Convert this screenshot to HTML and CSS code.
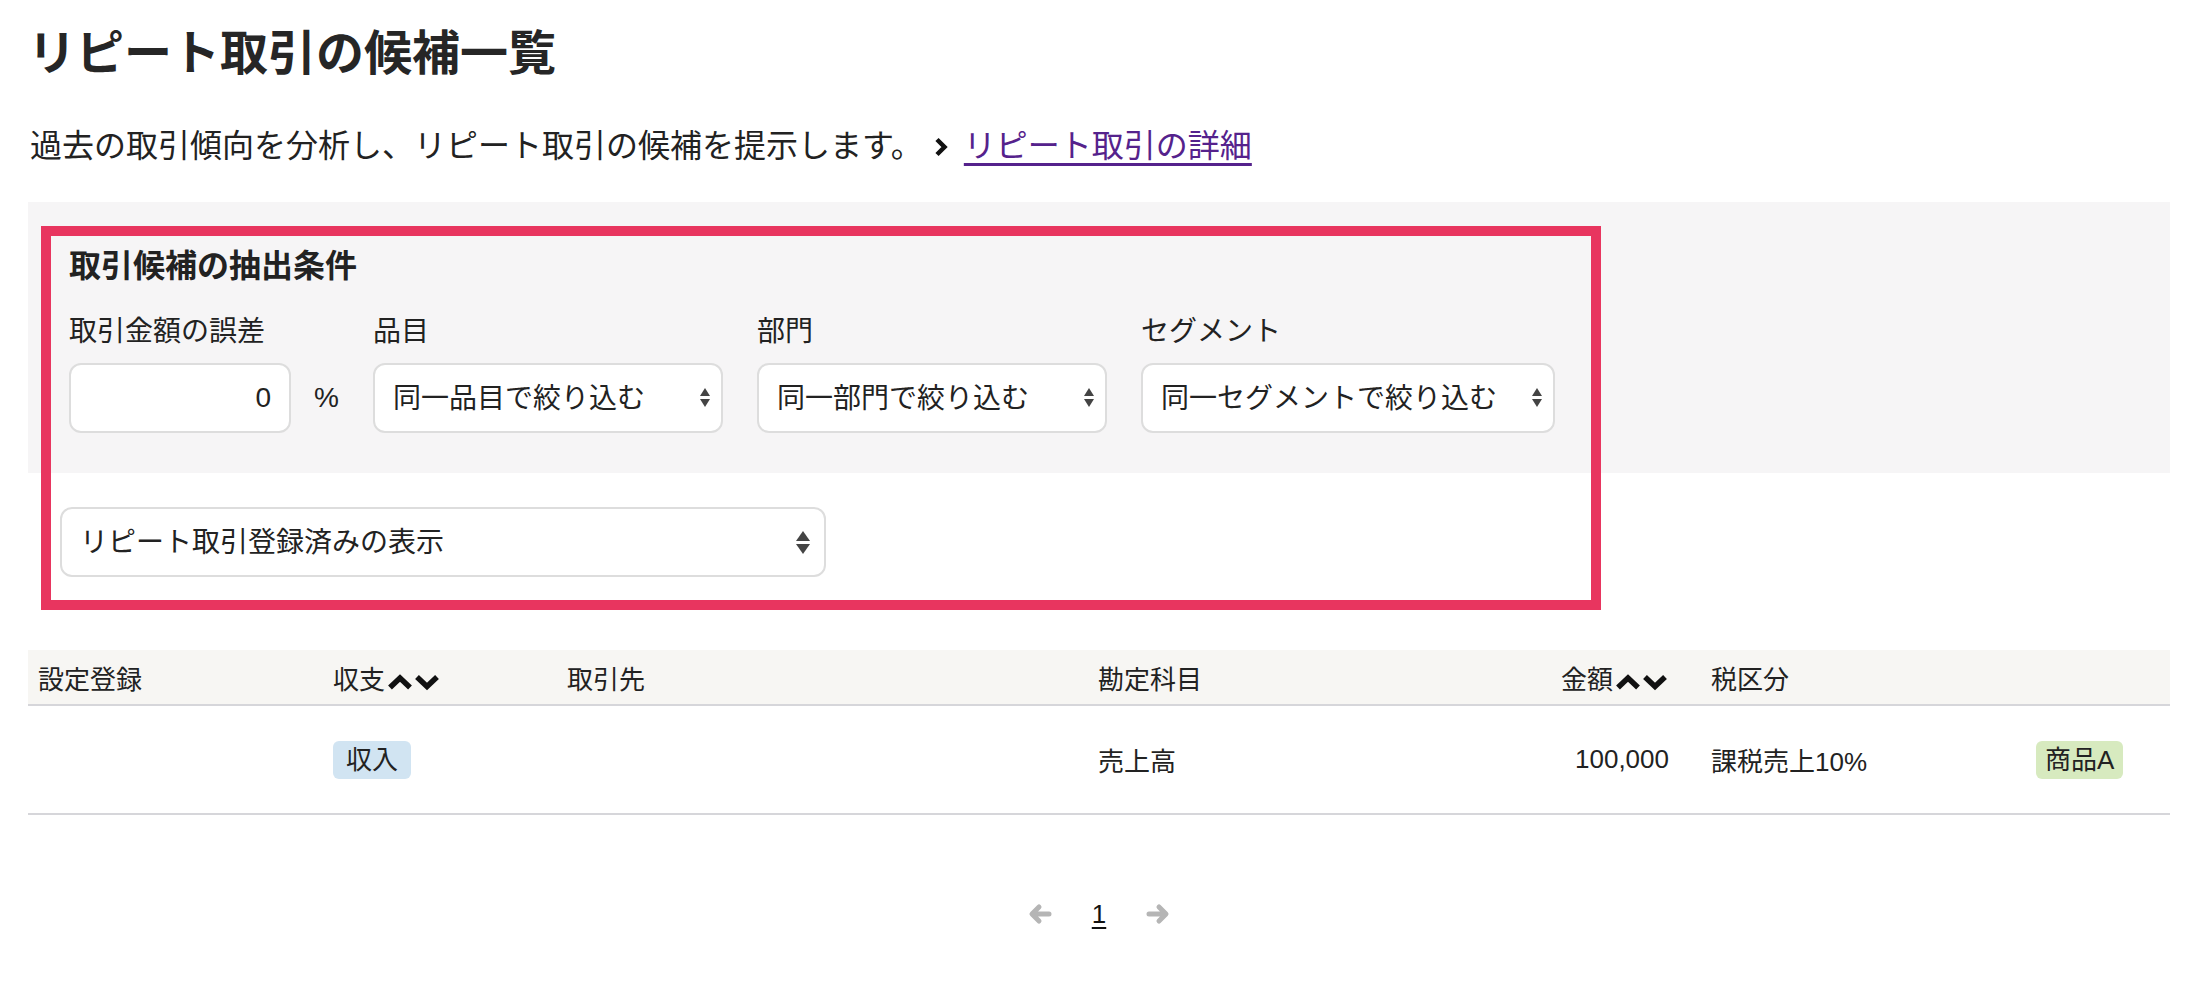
FILE: index.html
```html
<!DOCTYPE html>
<html lang="ja">
<head>
    <meta charset="UTF-8">
    <meta name="viewport" content="width=device-width, initial-scale=1.0">
    <title>リピート取引の候補一覧</title>
    <link rel="stylesheet" href="styles.css">
</head>
<body>
    <div class="page">
        <h1 class="page-title">リピート取引の候補一覧</h1>

        <p class="lead">過去の取引傾向を分析し、リピート取引の候補を提示します。<span class="lead-link"><svg class="chevron" width="16" height="22" viewBox="0 0 16 22"><polyline points="4,3.5 11.5,11 4,18.5" fill="none" stroke="#111" stroke-width="4.5"/></svg><a href="#">リピート取引の詳細</a></span></p>

        <section class="filters">
            <div class="conditions">
                <h2 class="conditions-title">取引候補の抽出条件</h2>
                <div class="conditions-row">
                    <div class="field">
                        <label class="field-label" for="amountDiff">取引金額の誤差</label>
                        <div class="field-inline">
                            <input class="text-input" id="amountDiff" type="text" value="0">
                            <span class="unit">%</span>
                        </div>
                    </div>
                    <div class="field">
                        <label class="field-label" for="itemFilter">品目</label>
                        <div class="select-wrap">
                            <select class="select select-item" id="itemFilter">
                                <option>同一品目で絞り込む</option>
                            </select>
                        </div>
                    </div>
                    <div class="field">
                        <label class="field-label" for="sectionFilter">部門</label>
                        <div class="select-wrap">
                            <select class="select select-item" id="sectionFilter">
                                <option>同一部門で絞り込む</option>
                            </select>
                        </div>
                    </div>
                    <div class="field">
                        <label class="field-label" for="segmentFilter">セグメント</label>
                        <div class="select-wrap">
                            <select class="select select-segment" id="segmentFilter">
                                <option>同一セグメントで絞り込む</option>
                            </select>
                        </div>
                    </div>
                </div>
            </div>

            <div class="display-option">
                <div class="select-wrap select-wrap-large">
                    <select class="select select-wide">
                        <option>リピート取引登録済みの表示</option>
                    </select>
                </div>
            </div>

            <div class="highlight"></div>
        </section>

        <table class="candidates">
            <colgroup>
                <col class="col-setting">
                <col class="col-type">
                <col class="col-partner">
                <col class="col-account">
                <col class="col-amount">
                <col class="col-tax">
                <col class="col-tag">
            </colgroup>
            <thead>
                <tr>
                    <th>設定登録</th>
                    <th>収支<svg class="sort-icon" width="54" height="18" viewBox="0 0 54 18"><polyline points="3,14.5 13,5 23,14.5" fill="none" stroke="#111" stroke-width="5.5"/><polyline points="30,4 40,13.5 50,4" fill="none" stroke="#111" stroke-width="5.5"/></svg></th>
                    <th>取引先</th>
                    <th>勘定科目</th>
                    <th class="num">金額<svg class="sort-icon" width="54" height="18" viewBox="0 0 54 18"><polyline points="3,14.5 13,5 23,14.5" fill="none" stroke="#111" stroke-width="5.5"/><polyline points="30,4 40,13.5 50,4" fill="none" stroke="#111" stroke-width="5.5"/></svg></th>
                    <th class="tax">税区分</th>
                    <th></th>
                </tr>
            </thead>
            <tbody>
                <tr>
                    <td></td>
                    <td><span class="badge badge-income">収入</span></td>
                    <td></td>
                    <td>売上高</td>
                    <td class="num">100,000</td>
                    <td class="tax">課税売上10%</td>
                    <td><span class="badge badge-item">商品A</span></td>
                </tr>
            </tbody>
        </table>

        <nav class="pager">
            <svg class="pager-arrow" width="24" height="22" viewBox="0 0 24 22"><path d="M21 11H5M11 4L4 11l7 7" fill="none" stroke="#b5b5b5" stroke-width="5" stroke-linecap="round" stroke-linejoin="round"/></svg>
            <a class="pager-page" href="#">1</a>
            <svg class="pager-arrow" width="24" height="22" viewBox="0 0 24 22"><path d="M3 11h16M13 4l7 7-7 7" fill="none" stroke="#b5b5b5" stroke-width="5" stroke-linecap="round" stroke-linejoin="round"/></svg>
        </nav>
    </div>
</body>
</html>
```

FILE: styles.css
```css
body, html {
    margin: 0;
    padding: 0;
    background: #fff;
    color: #222;
    font-family: 'Liberation Sans', 'Noto Sans CJK JP', sans-serif;
}

.page {
    padding: 18px 26px 40px 28px;
}

.page-title {
    margin: 0;
    font-size: 48px;
    line-height: 72px;
    font-weight: bold;
    color: #262626;
}

.lead {
    margin: 32px 0 0 2px;
    font-size: 32px;
    line-height: 48px;
}

.lead-link {
    margin-left: 10px;
}

.chevron {
    vertical-align: -1px;
    margin-right: 15px;
}

.lead-link a {
    color: #55228c;
    text-decoration: underline;
    text-decoration-thickness: 3px;
    text-underline-offset: 6px;
}

/* filter area */

.filters {
    position: relative;
    margin-top: 32px;
}

.conditions {
    background: #f6f5f6;
    padding: 40px 41px 40px;
}

.conditions-title {
    margin: 0;
    font-size: 32px;
    line-height: 48px;
    font-weight: bold;
}

.conditions-row {
    display: flex;
    gap: 34px;
    margin-top: 21px;
}

.field-label {
    display: block;
    font-size: 28px;
    line-height: 42px;
    margin-bottom: 10px;
}

.field-inline {
    display: flex;
    align-items: center;
    gap: 23px;
}

.text-input {
    box-sizing: border-box;
    width: 222px;
    height: 70px;
    border: 2px solid #ddd;
    border-radius: 12px;
    padding: 0 18px;
    text-align: right;
    font-family: inherit;
    font-size: 28px;
    color: #222;
    background: #fff;
}

.unit {
    font-size: 28px;
}

.select-wrap {
    position: relative;
}

.select-wrap::before,
.select-wrap::after {
    content: '';
    position: absolute;
    right: 13px;
    border-left: 5px solid transparent;
    border-right: 5px solid transparent;
    pointer-events: none;
}

.select-wrap::before {
    top: 25px;
    border-bottom: 8px solid #444;
}

.select-wrap::after {
    top: 36px;
    border-top: 8px solid #444;
}

.select {
    box-sizing: border-box;
    height: 70px;
    border: 2px solid #ddd;
    border-radius: 12px;
    padding: 0 40px 0 18px;
    font-family: inherit;
    font-size: 28px;
    color: #222;
    background: #fff;
    -webkit-appearance: none;
    appearance: none;
}

.select-item {
    width: 350px;
}

.select-segment {
    width: 414px;
}

.display-option {
    padding: 34px 0 0 32px;
}

.select-wrap-large {
    width: 766px;
}

.select-wrap-large::before {
    right: 16px;
    top: 24px;
    border-left-width: 7px;
    border-right-width: 7px;
    border-bottom-width: 10px;
}

.select-wrap-large::after {
    right: 16px;
    top: 37px;
    border-left-width: 7px;
    border-right-width: 7px;
    border-top-width: 10px;
}

.select-wide {
    width: 766px;
}

.highlight {
    position: absolute;
    top: 24px;
    left: 13px;
    width: 1560px;
    height: 384px;
    box-sizing: border-box;
    border: 10px solid #e8355f;
    pointer-events: none;
}

/* table */

.candidates {
    width: 2142px;
    margin-top: 73px;
    border-collapse: collapse;
    table-layout: fixed;
    font-size: 26px;
}

.col-setting { width: 295px; }
.col-type { width: 234px; }
.col-partner { width: 531px; }
.col-account { width: 372px; }
.col-amount { width: 241px; }
.col-tax { width: 325px; }
.col-tag { width: 144px; }

.candidates th {
    height: 54px;
    padding: 0 10px;
    background: #f7f6f3;
    border-bottom: 2px solid #d6d6da;
    font-weight: normal;
    text-align: left;
    white-space: nowrap;
}

.candidates td {
    height: 107px;
    padding: 0 10px;
    border-bottom: 2px solid #d6d6da;
    vertical-align: middle;
}

.candidates .num {
    text-align: right;
    padding-right: 32px;
}

.sort-icon {
    margin-left: 2px;
    vertical-align: -2px;
}

.badge {
    display: inline-block;
    padding: 0 13px;
    line-height: 38px;
    border-radius: 6px;
}

.badge-income {
    background: #d1e4f2;
}

.badge-item {
    background: #d7eabf;
    padding: 0 9px;
}

/* pager */

.pager {
    display: flex;
    justify-content: center;
    align-items: center;
    gap: 40px;
    margin-top: 79px;
    height: 40px;
}

.pager-page {
    color: #111;
    font-size: 26px;
    text-decoration: underline;
    text-decoration-thickness: 2px;
    text-underline-offset: 4px;
}
```
